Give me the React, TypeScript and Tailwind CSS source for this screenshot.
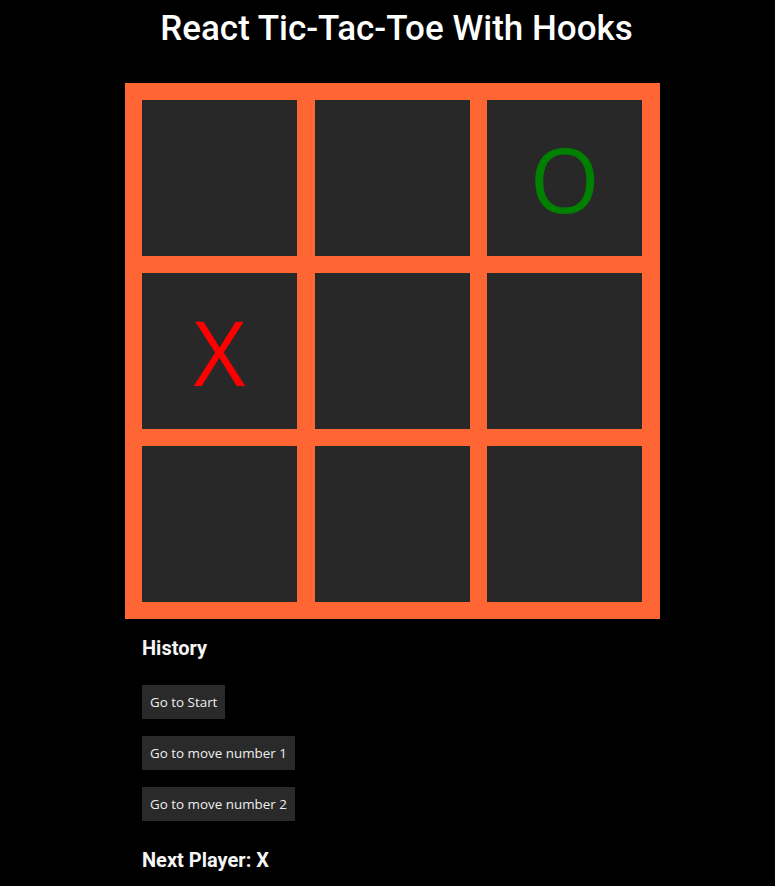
import { useState } from "react";

type Cell = "X" | "O" | null;

const Square = ({ value, onClick }: { value: Cell; onClick: () => void }) => (
  <button
    onClick={onClick}
    className={`w-[155px] h-[156px] bg-[#282828] flex items-center justify-center text-[90px] leading-none font-['Open_Sans',sans-serif] ${
      value === "X" ? "text-[#ff0000]" : "text-[#008000]"
    }`}
  >
    {value}
  </button>
);

export default function App() {
  const [squares, setSquares] = useState<Cell[]>([null, null, "O", "X", null, null, null, null, null]);
  const [xNext, setXNext] = useState(true);

  const handleClick = (i: number) => {
    if (squares[i]) return;
    const next = squares.slice();
    next[i] = xNext ? "X" : "O";
    setSquares(next);
    setXNext(!xNext);
  };

  return (
    <div className="min-h-screen bg-black text-white font-['Roboto',sans-serif] pl-[10px] pb-6">
      {/* Titulo */}
      <h1 className="text-center text-[35px] leading-[40px] font-medium pt-[9px] pl-[8px]">
        React Tic-Tac-Toe With Hooks
      </h1>

      <div className="w-[535px] mx-auto mt-[34px]">
        {/* Tabuleiro */}
        <div className="bg-[#ff6633] p-[17px] grid grid-cols-3 gap-[17px]">
          {squares.map((s, i) => (
            <Square key={i} value={s} onClick={() => handleClick(i)} />
          ))}
        </div>

        {/* Historico */}
        <div className="pl-[17px]">
          <h3 className="text-[20px] font-bold leading-[24px] mt-[17px] text-[#f5f5f5]">History</h3>
          <div className="flex flex-col items-start gap-[17px] mt-[25px]">
            {["Go to Start", "Go to move number 1", "Go to move number 2"].map((t) => (
              <button
                key={t}
                className="bg-[#2a2a2a] text-[#eeeeee] text-[13.4px] h-[34px] px-[8px] font-['Open_Sans',sans-serif]"
              >
                {t}
              </button>
            ))}
          </div>
          <h3 className="text-[20px] font-bold leading-[24px] mt-[27px] text-[#f5f5f5]">
            Next Player: {xNext ? "X" : "O"}
          </h3>
        </div>
      </div>
    </div>
  );
}
